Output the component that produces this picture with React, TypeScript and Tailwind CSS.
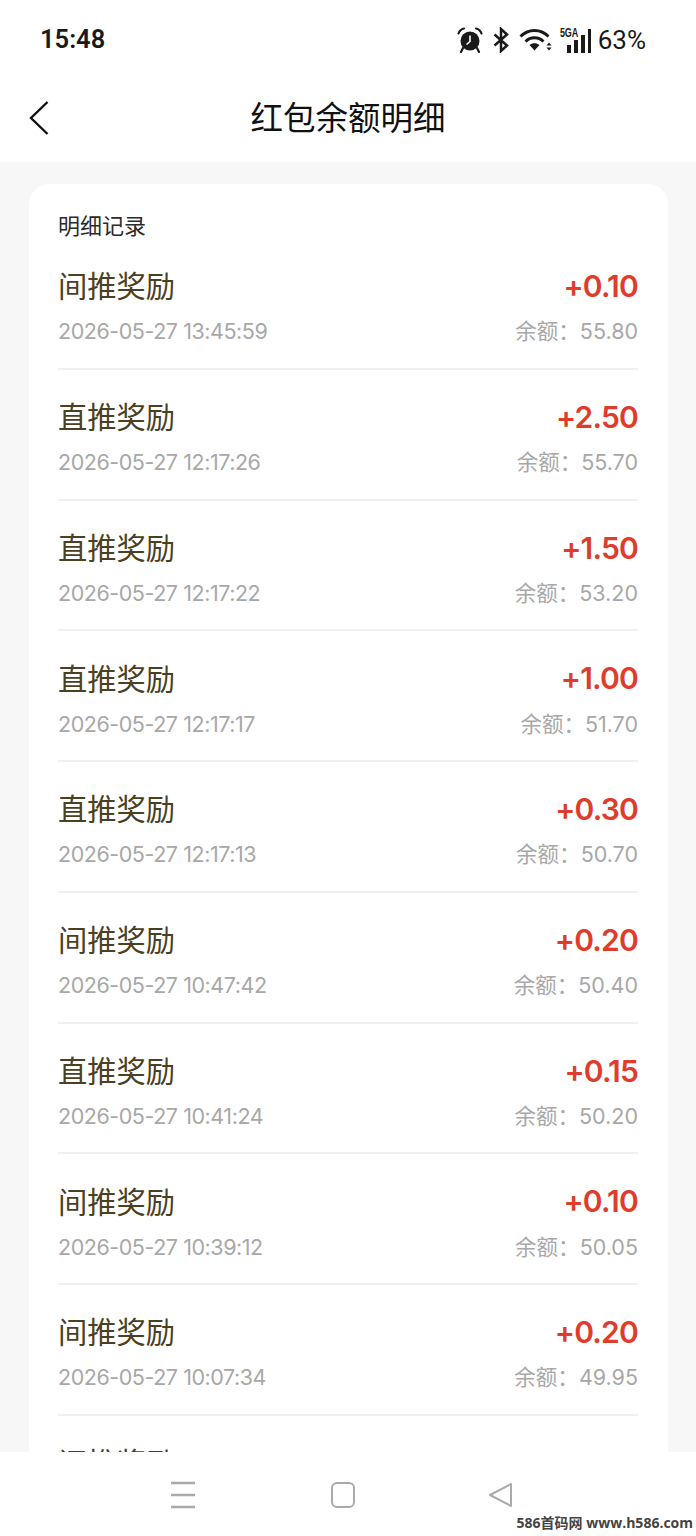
import React from "react";

const records = [
  { title: "间推奖励", time: "2026-05-27 13:45:59", amount: "+0.10", balance: "55.80" },
  { title: "直推奖励", time: "2026-05-27 12:17:26", amount: "+2.50", balance: "55.70" },
  { title: "直推奖励", time: "2026-05-27 12:17:22", amount: "+1.50", balance: "53.20" },
  { title: "直推奖励", time: "2026-05-27 12:17:17", amount: "+1.00", balance: "51.70" },
  { title: "直推奖励", time: "2026-05-27 12:17:13", amount: "+0.30", balance: "50.70" },
  { title: "间推奖励", time: "2026-05-27 10:47:42", amount: "+0.20", balance: "50.40" },
  { title: "直推奖励", time: "2026-05-27 10:41:24", amount: "+0.15", balance: "50.20" },
  { title: "间推奖励", time: "2026-05-27 10:39:12", amount: "+0.10", balance: "50.05" },
  { title: "间推奖励", time: "2026-05-27 10:07:34", amount: "+0.20", balance: "49.95" },
];

const font = "font-['Inter','Noto_Sans_CJK_SC',sans-serif]";

function StatusIcons() {
  return (
    <div className="flex items-center text-[#1a1a1a]">
      {/* alarm */}
      <svg width="26" height="26" viewBox="0 0 26 26" className="mr-[9px]">
        <circle cx="13" cy="14" r="9.5" fill="#1a1a1a" />
        <path d="M13 8.5V14.5L9.5 17.5" stroke="#fff" strokeWidth="1.6" fill="none" />
        <path d="M1.5 6.5C2.5 3.5 4.5 2 7 1.5M24.5 6.5C23.5 3.5 21.5 2 19 1.5" stroke="#1a1a1a" strokeWidth="2.2" fill="none" strokeLinecap="round" />
        <path d="M6 21L4 25M20 21L22 25" stroke="#1a1a1a" strokeWidth="2.2" strokeLinecap="round" />
      </svg>
      {/* bluetooth */}
      <svg width="18" height="26" viewBox="0 0 18 26" className="mr-[9px]">
        <path d="M2.5 7.5L15 18.5L9 24V2L15 7.5L2.5 18.5" stroke="#1a1a1a" strokeWidth="2.5" fill="none" />
      </svg>
      {/* wifi with arrows */}
      <svg width="34" height="26" viewBox="0 0 34 26" className="mr-[7px]">
        <path d="M1.5 9.5C9.5 1.5 21.5 1.5 29.5 9.5" stroke="#1a1a1a" strokeWidth="2.8" fill="none" />
        <path d="M6.5 14.5C11.5 9.5 19.5 9.5 24.5 14.5" stroke="#1a1a1a" strokeWidth="2.8" fill="none" />
        <path d="M10.5 18L15.5 23.5L20.5 18C17.5 15.5 13.5 15.5 10.5 18Z" fill="#1a1a1a" />
        <path d="M27.5 18.5L30 15.5L32.5 18.5ZM27.5 20.5L30 23.5L32.5 20.5Z" fill="#1a1a1a" />
      </svg>
      {/* 5GA signal */}
      <div className="relative w-[31px] h-[26px] mr-[7px]">
        <span className="absolute left-0 top-[0px] font-['Liberation_Sans',sans-serif] font-bold text-[12px] leading-[12px] tracking-[-0.2px] scale-x-[0.75] origin-left">5GA</span>
        <div className="absolute right-0 bottom-0 flex items-end gap-[3px]">
          <div className="w-[4px] h-[8px] bg-[#1a1a1a]" />
          <div className="w-[4px] h-[13px] bg-[#1a1a1a]" />
          <div className="w-[4px] h-[18px] bg-[#1a1a1a]" />
          <div className="w-[3px] h-[24px] bg-[#1a1a1a]" />
        </div>
      </div>
      <span className="text-[26px] leading-none font-normal font-['Roboto',sans-serif]">63%</span>
    </div>
  );
}

function RecordRow({ title, time, amount, balance }: (typeof records)[number]) {
  return (
    <div className="h-[130.75px] border-b-2 border-[#efefef] flex flex-col">
      <div className="flex justify-between items-center h-[46px] mt-[25px]">
        <span className="text-[29.25px] leading-none text-[#4a4022]">{title}</span>
        <span className="text-[30px] leading-none font-semibold text-[#e03c2c] tracking-[-0.8px] -translate-y-px">{amount}</span>
      </div>
      <div className="flex justify-between items-center h-[30px] mt-[7px] text-[21.5px] leading-none text-[#a8a8a8]">
        <span className="tracking-[-0.45px]">{time}</span>
        <span>余额：{balance}</span>
      </div>
    </div>
  );
}

export default function App() {
  return (
    <div className={`relative w-[696px] h-[1536px] overflow-hidden bg-[#f7f7f7] flex flex-col ${font}`}>
      <div className="bg-white h-[162px] shrink-0 flex flex-col">
        <div className="flex items-center justify-between h-[80px] pl-[40px] pr-[50px]">
          <span className="text-[25.5px] leading-none font-semibold text-[#1a1a1a] font-['Roboto',sans-serif]">15:48</span>
          <StatusIcons />
        </div>
        <div className="relative flex-1 flex items-center justify-center pb-[4px]">
          <svg width="22" height="36" viewBox="0 0 22 36" className="absolute left-[28px] top-[20px]">
            <path d="M19.5 2L3 18L19.5 34" stroke="#111" strokeWidth="2.4" fill="none" />
          </svg>
          <span className="text-[32.5px] leading-none text-[#111]">红包余额明细</span>
        </div>
      </div>

      {/* scroll area, clipped by the navigation bar */}
      <div className="flex-1 min-h-0 overflow-hidden">
        <div className="mt-[22px] ml-[29px] mr-[28px] bg-white rounded-t-[20px] pl-[29px] pr-[30px] pt-[30px] h-[1400px]">
          <div className="text-[22px] leading-[25px] text-[#2b2b2b]">明细记录</div>
          {records.map((r, i) => (
            <RecordRow key={i} {...r} />
          ))}
          <div className="flex justify-between items-center h-[46px] mt-[25px]">
            <span className="text-[29.25px] leading-none text-[#4a4022]">间推奖励</span>
            <span className="text-[30px] leading-none font-semibold text-[#e03c2c] tracking-[-0.8px] -translate-y-px">+0.10</span>
          </div>
        </div>
      </div>

      {/* system navigation bar */}
      <div className="relative h-[84px] shrink-0 bg-white">
        <svg width="28" height="28" viewBox="0 0 28 28" className="absolute left-[170px] top-[29px]">
          <path d="M1 2H25M1 14H25M1 26H25" stroke="#aaa" strokeWidth="2.4" />
        </svg>
        <svg width="26" height="28" viewBox="0 0 26 28" className="absolute left-[330px] top-[29px]">
          <rect x="2" y="2" width="22" height="24" rx="5" stroke="#aaa" strokeWidth="2" fill="none" />
        </svg>
        <svg width="28" height="28" viewBox="0 0 28 28" className="absolute left-[487px] top-[29px]">
          <path d="M24 3V25L3 14Z" stroke="#aaa" strokeWidth="2" fill="none" strokeLinejoin="round" />
        </svg>
        <span className="absolute right-[3px] bottom-[6px] text-[14px] leading-none font-bold text-[#444] font-['Open_Sans','Noto_Sans_CJK_SC',sans-serif]">586首码网 www.h586.com</span>
      </div>
    </div>
  );
}
